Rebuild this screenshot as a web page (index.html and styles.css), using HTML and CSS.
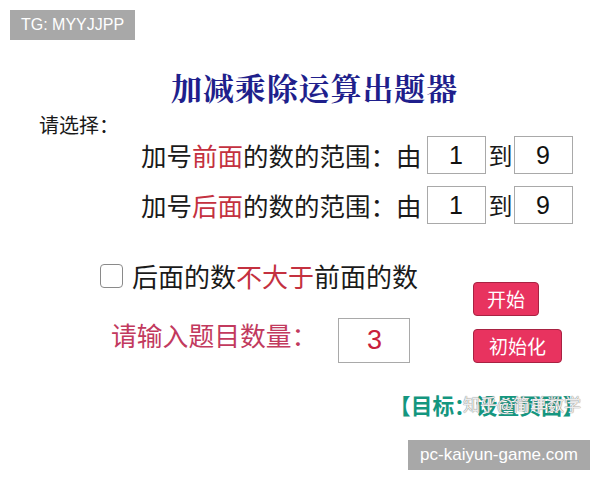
FILE: index.html
```html
<!DOCTYPE html>
<html>
<head>
<meta charset="utf-8">
<link rel="stylesheet" href="styles.css">
</head>
<body>
<div class="page">
  <div class="tg">TG: MYYJJPP</div>
  <h1 class="title">加减乘除运算出题器</h1>
  <div class="prompt">请选择：</div>
  <div class="row">
    <span class="label">加号<em class="red">前面</em>的数的范围：由</span>
    <span class="box">1</span>
    <span class="to">到</span>
    <span class="box">9</span>
  </div>
  <div class="row row2">
    <span class="label">加号<em class="red">后面</em>的数的范围：由</span>
    <span class="box">1</span>
    <span class="to">到</span>
    <span class="box">9</span>
  </div>
  <div class="lower">
    <div class="left">
      <div class="check-row">
        <span class="checkbox"></span>
        <span class="check-text">后面的数<em class="red">不大于</em>前面的数</span>
      </div>
      <div class="count-row">
        <span class="count-label">请输入题目数量：</span>
        <span class="count-box">3</span>
      </div>
    </div>
    <div class="right">
      <span class="btn">开始</span>
      <span class="btn btn-wide">初始化</span>
    </div>
  </div>
  <div class="goal-line">
    <span class="goal">【目标：设置页面】</span>
    <span class="mark">知乎@简单数学</span>
  </div>
  <div class="site">pc-kaiyun-game.com</div>
</div>
</body>
</html>
```
FILE: styles.css
```css
html, body {
  margin: 0;
  padding: 0;
  background: #ffffff;
}
.page {
  position: relative;
  width: 600px;
  height: 480px;
  overflow: hidden;
  font-family: "Noto Sans CJK SC", "Noto Sans", sans-serif;
  color: #1a1a1a;
}
em { font-style: normal; }
.red { color: #c4313f; }

.tg {
  position: absolute;
  left: 10px;
  top: 10px;
  width: 125px;
  height: 30px;
  background: #a8a8a8;
  color: #ffffff;
  font-family: "Liberation Sans", Arial, sans-serif;
  font-size: 16px;
  line-height: 30px;
  text-align: center;
}

.title {
  margin: 70px 0 0 171px;
  height: 34px;
  font-family: "Noto Serif CJK SC", "Noto Sans CJK SC", serif;
  font-weight: 700;
  font-size: 31px;
  line-height: 34px;
  letter-spacing: 0.9px;
  color: #1f1f8c;
}

.prompt {
  margin: 9px 0 0 39px;
  height: 23px;
  font-size: 20px;
  line-height: 23px;
}

.row {
  display: flex;
  align-items: center;
  height: 38px;
  padding-left: 141px;
}
.row2 { margin-top: 12px; }
.label {
  font-size: 25.5px;
  line-height: 38px;
  margin-right: 5px;
  white-space: nowrap;
}
.box {
  box-sizing: border-box;
  width: 59px;
  height: 38px;
  border: 1px solid #a9a9a9;
  font-family: "Liberation Sans", Arial, sans-serif;
  font-size: 25px;
  line-height: 36px;
  text-align: center;
  color: #111;
}
.to {
  font-size: 24px;
  line-height: 38px;
  margin: 0 1px 0 3px;
}

.lower {
  display: flex;
  margin-top: 38px;
}
.left {
  width: 473px;
}
.check-row {
  display: flex;
  align-items: center;
  height: 28px;
  padding-left: 100px;
}
.checkbox {
  box-sizing: border-box;
  width: 23px;
  height: 24px;
  border: 1.5px solid #8a8a8a;
  border-radius: 4px;
  margin-right: 9px;
}
.check-text {
  font-size: 26px;
  line-height: 28px;
  white-space: nowrap;
}
.count-row {
  display: flex;
  align-items: center;
  margin-top: 28px;
  padding-left: 111px;
  height: 45px;
}
.count-label {
  align-self: flex-start;
  font-size: 25.8px;
  line-height: 34px;
  color: #c23a5e;
  margin-right: 21px;
  white-space: nowrap;
}
.count-box {
  box-sizing: border-box;
  width: 72px;
  height: 45px;
  border: 1px solid #a9a9a9;
  font-family: "Liberation Sans", Arial, sans-serif;
  font-size: 27px;
  line-height: 43px;
  text-align: center;
  color: #c8203c;
}
.right {
  display: flex;
  flex-direction: column;
  align-items: flex-start;
  gap: 13px;
  padding-top: 20px;
}
.btn {
  box-sizing: border-box;
  width: 66px;
  height: 34px;
  background: #e8335f;
  border: 1px solid #a82242;
  border-radius: 4px;
  color: #ffffff;
  font-size: 19px;
  line-height: 32px;
  text-align: center;
}
.btn-wide { width: 89px; }

.goal-line {
  position: relative;
  margin: 28px 0 0 389px;
  height: 28px;
}
.goal {
  font-size: 21.7px;
  line-height: 28px;
  font-weight: 700;
  color: #14967f;
  white-space: nowrap;
}
.mark {
  position: absolute;
  left: 74px;
  top: 3px;
  font-size: 17px;
  line-height: 20px;
  color: rgba(255, 255, 255, 0.85);
  text-shadow: 0 0 1px #888, 0 0 1px #888;
  white-space: nowrap;
}

.site {
  position: absolute;
  left: 408px;
  top: 440px;
  width: 182px;
  height: 30px;
  background: #a8a8a8;
  color: #ffffff;
  font-family: "Liberation Sans", Arial, sans-serif;
  font-size: 17px;
  line-height: 30px;
  text-align: center;
}
```
